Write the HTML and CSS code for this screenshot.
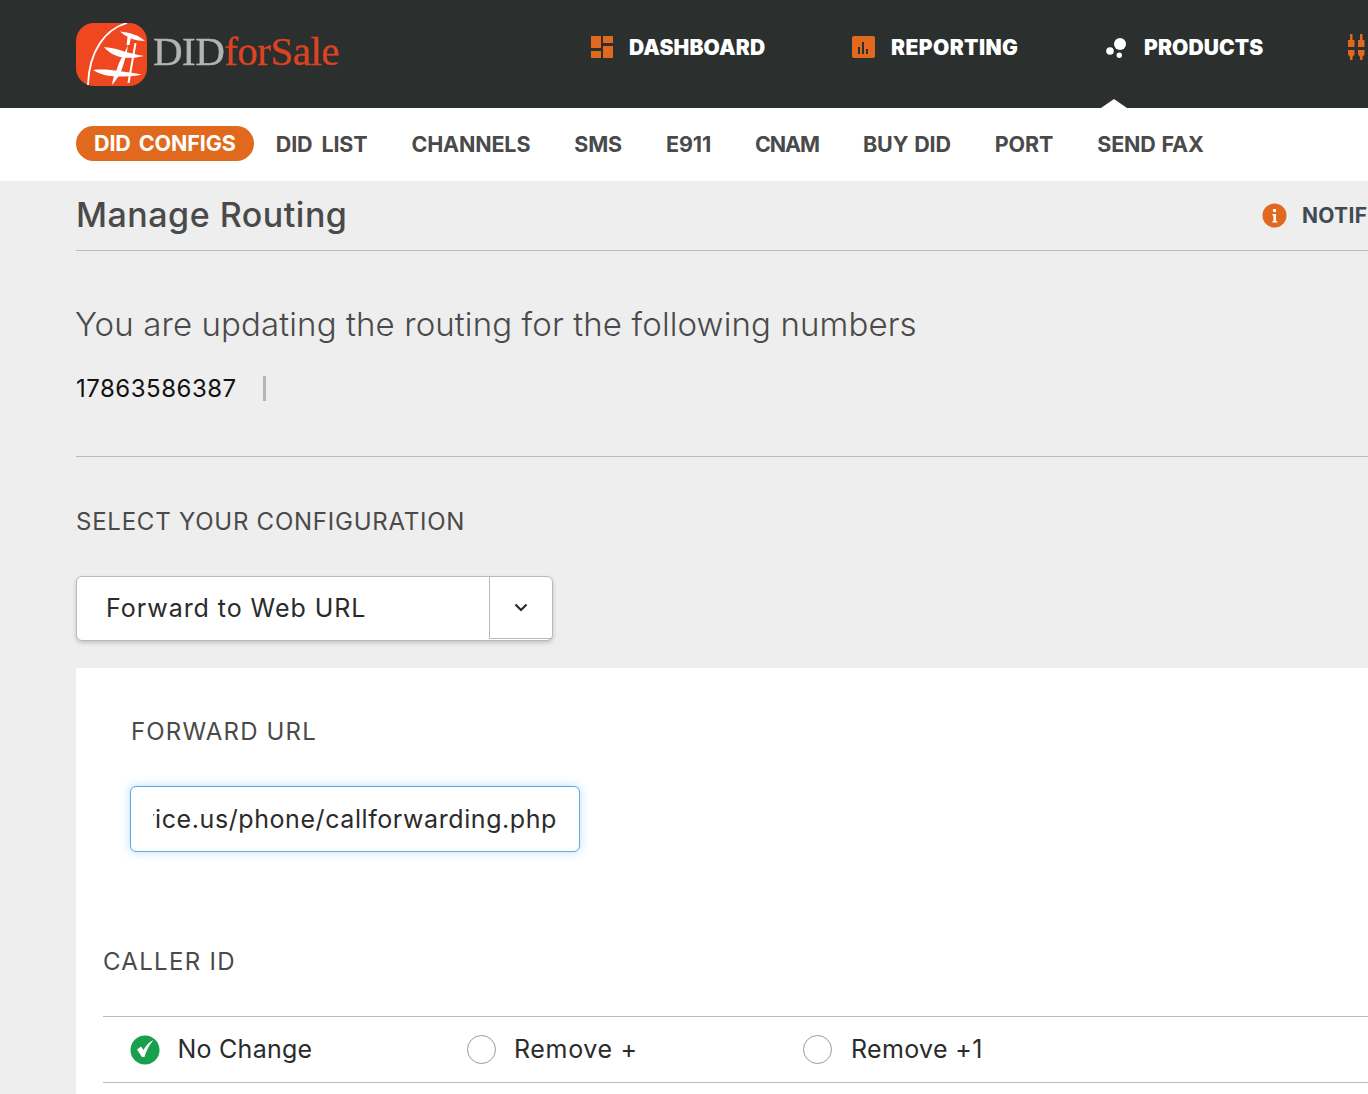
FILE: index.html
```html
<!DOCTYPE html>
<html lang="en">
<head>
<meta charset="utf-8">
<title>Manage Routing</title>
<link rel="stylesheet" href="styles.css">
</head>
<body>
<header class="topbar">
  <a class="logo">
    <svg class="logo-mark" width="71" height="63" viewBox="0 0 71 63">
      <rect x="0" y="0" width="71" height="63" rx="18" fill="#ef4720"/>
      <path d="M51 0C30 6 13 27 12 62" fill="none" stroke="#fff" stroke-width="1.800"/>
      <g fill="#fff">
        <path d="M44 8.500C53 9.500 63 12 69 18C60 18 51 15 44 8.500z"/>
        <path d="M28 24C36 24.500 43 26.500 48 28.500C55 30.500 61 31.500 68 33C60 35 53 35 47 34.500C40 33.500 33 30 28 24z"/>
        <path d="M17 47C27 46 36 47 42 48C50 49 58 50 66 51.500C57 53.500 49 53.500 42 53.500C33 53.500 24 51.500 17 47z"/>
        <path d="M52 22C49 30 44 36 42 43C40 49 37 54 36 62C41 56 45 50 47 43C49 36 51 30 52 22z"/>
        <path d="M58.500 20L60.500 20.300L53.500 60L51.500 59.700z"/>
        <path d="M51.500 14h3.500l-1.500 8h-3z"/>
      </g>
    </svg>
    <span class="logo-text"><span class="logo-did">DID</span><span class="logo-sale">forSale</span></span>
  </a>
  <nav class="mainnav">
    <a class="mainnav-item nav-dash">
      <svg class="nav-icon" width="22" height="22" viewBox="0 0 22 22"><path fill="#e1691d" d="M0 0h10v12H0zM12 0h10v7H12zM12 10h10v12H12zM0 15h10v7H0z"/></svg>
      DASHBOARD
    </a>
    <a class="mainnav-item nav-report">
      <svg class="nav-icon" width="23" height="22" viewBox="0 0 23 22"><rect width="23" height="22" rx="2" fill="#e1691d"/><path fill="#2b2f2e" d="M6 11h2v7H6zM10 6h2v12h-2zM14 13h2v5h-2z"/></svg>
      REPORTING
    </a>
    <a class="mainnav-item nav-products">
      <svg class="nav-icon" width="20" height="22" viewBox="0 0 20 22"><circle cx="14" cy="8" r="6" fill="#fff"/><circle cx="4" cy="15" r="3.800" fill="#fff"/><circle cx="13.300" cy="19.300" r="2.700" fill="#fff"/></svg>
      PRODUCTS
    </a>
    <a class="mainnav-item nav-last" aria-label="Trunks">
      <svg class="nav-icon" width="30" height="26" viewBox="0 0 30 26"><path fill="#e1691d" d="M3 0h2.500v6H7.500v7H1V6H3zM1 16h6.500v4.500L5.500 23v3H3v-3L1 20.500zM13 0h2.500v6h2v7H11V6h2zM11 16h6.500v4.500L15.500 23v3H13v-3L11 20.500zM23 0h2.500v6h2v7H21V6h2zM21 16h6.500v4.500L25.500 23v3H23v-3L21 20.500z"/></svg>
    </a>
  </nav>
</header>

<nav class="subnav">
  <a class="pill">DID CONFIGS</a>
  <a class="subnav-item item-list">DID LIST</a>
  <a class="subnav-item">CHANNELS</a>
  <a class="subnav-item">SMS</a>
  <a class="subnav-item">E911</a>
  <a class="subnav-item item-cnam">CNAM</a>
  <a class="subnav-item item-buy">BUY DID</a>
  <a class="subnav-item">PORT</a>
  <a class="subnav-item item-buy">SEND FAX</a>
</nav>

<main class="page">
  <div class="title-row">
    <h1 class="title">Manage Routing</h1>
    <div class="notif">
      <svg width="25" height="25" viewBox="0 0 25 25"><circle cx="12.500" cy="12.500" r="12" fill="#e1691d"/><path fill="#fff" d="M11 6h3v3h-3zM10.500 11H14v7h1.200v1.500h-4.700V18H11.500v-5.500h-1z"/></svg>
      <span class="notif-text">NOTIFICATIONS</span>
    </div>
  </div>

  <section class="numbers">
    <h2 class="updating">You are updating the routing for the following numbers</h2>
    <div class="number-row"><span class="number">17863586387</span><span class="pipe"></span></div>
  </section>

  <h3 class="label config-label">SELECT YOUR CONFIGURATION</h3>
  <div class="select">
    <span class="select-value">Forward to Web URL</span>
    <span class="select-arrow">
      <svg width="14" height="9" viewBox="0 0 14 9"><path d="M1.500 1.500L7 7l5.500-5.500" fill="none" stroke="#2b2b2b" stroke-width="2.200"/></svg>
    </span>
  </div>

  <section class="panel">
    <h3 class="label url-label">FORWARD URL</h3>
    <div class="url-input"><div class="url-clip"><span class="url-value">https://voiceservice.us/phone/callforwarding.php</span></div></div>
    <h3 class="label caller-label">CALLER ID</h3>
    <div class="radio-row">
      <label class="radio radio-a">
        <svg width="30" height="30" viewBox="0 0 30 30"><circle cx="15" cy="15" r="14.500" fill="#18a04c"/><path d="M7 14.500L11 11.500L13.500 15C15.500 11 19 7 23.500 5C19 10 16 16 14.500 22H12z" fill="#fff"/></svg>
        <span class="radio-label">No Change</span>
      </label>
      <label class="radio radio-b"><span class="radio-empty"></span><span class="radio-label">Remove +</span></label>
      <label class="radio radio-c"><span class="radio-empty"></span><span class="radio-label">Remove +1</span></label>
    </div>
  </section>
</main>
</body>
</html>
```

FILE: styles.css
```css
* { box-sizing: border-box; }
html, body { margin: 0; padding: 0; }
body {
  height: 1094px;
  width: 1368px;
  overflow: hidden;
  background: #eeeeee;
  font-family: "Inter", "Open Sans", sans-serif;
  color: #2b2b2b;
}
h1, h2, h3 { margin: 0; font-weight: 400; }

.topbar {
  height: 108px;
  background: #2b2f2e;
  display: flex;
  padding-left: 76px;
  white-space: nowrap;
}
.logo { display: flex; align-items: center; height: 100%; padding-top: 1px; width: 515px; flex: none; filter: blur(.5px); }
.logo-mark { flex: none; }
.logo-text { font-family: "Liberation Serif", serif; font-size: 41px; margin-left: 6px; letter-spacing: -.5px; padding-bottom: 8px; -webkit-text-stroke: .4px; }
.logo-did { color: #b4b4b4; }
.logo-sale { color: #dc4322; }

.mainnav { display: flex; position: relative; height: 100%; flex: none; }
.mainnav-item {
  display: flex;
  align-items: center;
  height: 94px;
  color: #fff;
  font-weight: 900;
  font-size: 21px;
  letter-spacing: .12px;
}
.nav-icon { flex: none; margin-right: 16px; }
.nav-dash { width: 261px; }
.nav-report { width: 254px; letter-spacing: .42px; }
.nav-products { width: 241px; position: relative; height: 108px; padding-bottom: 14px; letter-spacing: .1px; }
.nav-products .nav-icon { margin-right: 18px; }
.nav-products::after {
  content: "";
  position: absolute;
  left: -5px;
  bottom: 0;
  border-left: 13px solid transparent;
  border-right: 13px solid transparent;
  border-bottom: 9px solid #fff;
}

.subnav {
  height: 73px;
  background: #fff;
  display: flex;
  align-items: center;
  padding-left: 76px;
  padding-bottom: 2px;
  white-space: nowrap;
}
.pill {
  height: 35px;
  line-height: 35px;
  padding: 0 18px;
  background: #e1691d;
  color: #fff;
  border-radius: 18px;
  font-weight: 700;
  font-size: 21.500px;
  letter-spacing: -.1px;
  word-spacing: 3px;
}
.subnav-item {
  padding: 0 22px;
  color: #4a4a4a;
  font-weight: 700;
  font-size: 21.500px;
  letter-spacing: -.15px;
}
.item-list { word-spacing: 4px; }
.item-cnam { letter-spacing: -1.1px; }
.item-buy { word-spacing: 1px; }

.page { padding-left: 76px; }
.title-row {
  height: 70px;
  border-bottom: 1px solid #bbbbbb;
  display: flex;
  align-items: center;
  justify-content: space-between;
  white-space: nowrap;
  padding-bottom: 1px;
  margin-right: -40px;
}
.title { font-size: 34px; font-weight: 500; color: #4a4a4a; letter-spacing: .5px; margin-top: -1px; }
.notif { display: flex; align-items: center; gap: 15px; width: 146px; flex: none; }
.notif svg { flex: none; }
.notif-text { font-size: 21px; font-weight: 700; color: #414a52; letter-spacing: .3px; }

.numbers { height: 206px; border-bottom: 1px solid #bbbbbb; padding-top: 52px; }
.updating { font-size: 33px; font-weight: 300; color: #4a4a4a; letter-spacing: .12px; line-height: 42px; white-space: nowrap; margin-left: -1px; }
.number-row { display: flex; align-items: center; margin-top: 30px; height: 26px; }
.number { font-size: 24px; color: #111; width: 187px; letter-spacing: .5px; }
.pipe { width: 3px; height: 25px; background: #b5b5b5; }

.label { font-size: 24px; color: #4a4a4a; line-height: 30px; white-space: nowrap; }
.config-label { margin-top: 50px; letter-spacing: .76px; }

.select {
  margin-top: 39px;
  width: 477px;
  height: 65px;
  background: #fff;
  border: 1px solid #b9b9b9;
  border-radius: 6px;
  box-shadow: 0 2px 4px rgba(0,0,0,.18);
  display: flex;
}
.select-value { flex: 1; padding-left: 29px; line-height: 62px; font-size: 25px; color: #2b2b2b; letter-spacing: .95px; }
.select-arrow {
  width: 63px;
  height: 62px;
  border-left: 1px solid #b9b9b9;
  border-bottom: 1px solid #b9b9b9;
  display: flex;
  align-items: center;
  justify-content: center;
}

.panel {
  margin-top: 27px;
  background: #fff;
  height: 426px;
  padding-top: 49px;
  padding-left: 27px;
}
.url-label { margin-left: 28px; letter-spacing: 1.15px; }
.url-input {
  margin-left: 27px;
  margin-top: 39px;
  width: 450px;
  height: 66px;
  background: #fff;
  border: 1px solid #5aa9ec;
  border-radius: 6px;
  box-shadow: 0 0 10px rgba(90,169,236,.4);
  padding: 0 22px;
  display: flex;
  align-items: center;
}
.url-clip { width: 100%; overflow: hidden; display: flex; justify-content: flex-end; white-space: nowrap; }
.url-value { font-size: 25px; color: #2b2b2b; flex: none; line-height: 34px; letter-spacing: .58px; }
.caller-label { margin-top: 95px; letter-spacing: 1.3px; }
.radio-row {
  margin-top: 39px;
  height: 67px;
  border-top: 1px solid #b9b9b9;
  border-bottom: 1px solid #b9b9b9;
  display: flex;
  align-items: center;
  padding-left: 26.500px;
}
.radio { display: flex; align-items: center; gap: 18px; font-size: 25px; color: #2b2b2b; white-space: nowrap; letter-spacing: .25px; }
.radio-label { padding-bottom: 2px; }
.radio-a { width: 337.500px; }
.radio-b { width: 336px; letter-spacing: .65px; }
.radio-c { gap: 19px; letter-spacing: .35px; }
.radio-empty {
  width: 29px;
  height: 29px;
  border: 1px solid #9a9a9a;
  border-radius: 50%;
  background: #fff;
  flex: none;
}
```
